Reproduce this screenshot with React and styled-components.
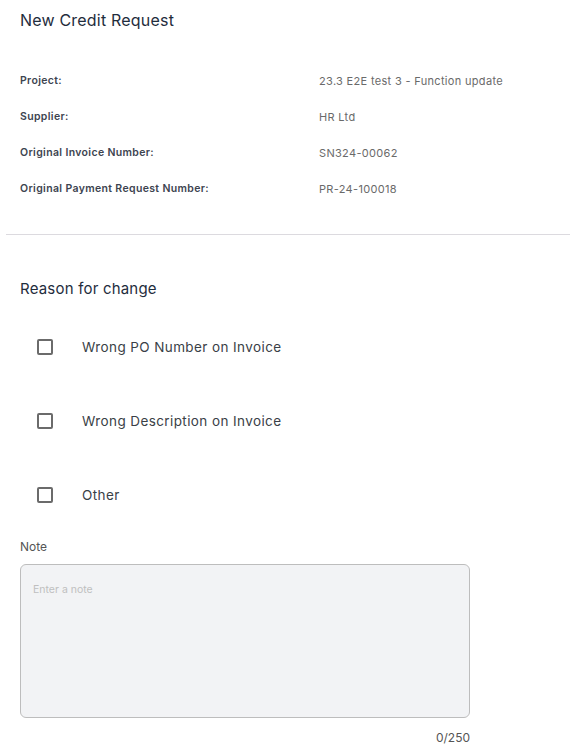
import styled, { createGlobalStyle } from "styled-components";

const GlobalStyle = createGlobalStyle`
  body {
    margin: 0;
    background: #fff;
    font-family: "Inter", "Liberation Sans", sans-serif;
  }
`;

const Page = styled.div`
  width: 571px;
`;

const Header = styled.div`
  padding: 10px 20px 0 20px;
`;

const Title = styled.h1`
  margin: 0;
  font-size: 16px;
  font-weight: 400;
  color: #1f2d3d;
  line-height: 20px;
  letter-spacing: 0.2px;
`;

const Details = styled.div`
  display: grid;
  grid-template-columns: 299px 1fr;
  row-gap: 20px;
  padding-top: 43px;
  padding-bottom: 37px;
`;

const Label = styled.div`
  font-size: 10.5px;
  font-weight: 600;
  color: #3d4450;
  line-height: 16px;
  letter-spacing: 0.35px;
`;

const Value = styled.div`
  font-size: 11px;
  color: #6a6a6a;
  line-height: 16px;
  letter-spacing: 0.32px;
`;

const Divider = styled.hr`
  margin: 0 1px 0 6px;
  border: none;
  border-top: 1px solid #dcdadf;
`;

const Section = styled.div`
  padding: 44px 20px 0 20px;
`;

const SectionTitle = styled.h2`
  margin: 0;
  font-size: 15px;
  font-weight: 400;
  color: #1f2d3d;
  line-height: 20px;
  letter-spacing: 0.2px;
`;

const Options = styled.div`
  display: flex;
  flex-direction: column;
  gap: 54px;
  padding: 38px 0 0 17px;
`;

const Option = styled.label`
  display: flex;
  align-items: center;
  gap: 29px;
  height: 20px;
  font-size: 13.5px;
  color: #3a3f47;
  letter-spacing: 0.4px;
  cursor: pointer;
`;

const Box = styled.span`
  width: 12px;
  height: 12px;
  border: 2px solid #6b6b6b;
  border-radius: 2px;
  flex-shrink: 0;
`;

const NoteLabel = styled.div`
  margin-top: 34px;
  font-size: 12px;
  color: #555;
  line-height: 16px;
`;

const TextArea = styled.textarea`
  display: block;
  box-sizing: border-box;
  width: 450px;
  height: 154px;
  margin-top: 9px;
  padding: 18px 12px;
  background: #f2f3f5;
  border: 1px solid #bdbdbd;
  border-radius: 6px;
  resize: none;
  font-family: inherit;
  font-size: 10.5px;
  color: #333;
  outline: none;

  &::placeholder {
    color: #bfbfbf;
  }
`;

const Counter = styled.div`
  width: 450px;
  text-align: right;
  margin-top: 12px;
  font-size: 12px;
  color: #555;
`;

const rows = [
  ["Project:", "23.3 E2E test 3 - Function update"],
  ["Supplier:", "HR Ltd"],
  ["Original Invoice Number:", "SN324-00062"],
  ["Original Payment Request Number:", "PR-24-100018"],
];

const reasons = [
  "Wrong PO Number on Invoice",
  "Wrong Description on Invoice",
  "Other",
];

const App = () => {
  return (
    <Page>
      <GlobalStyle />
      <Header>
        <Title>New Credit Request</Title>
        <Details>
          {rows.flatMap(([label, value]) => [
            <Label key={label}>{label}</Label>,
            <Value key={label + "-value"}>{value}</Value>,
          ])}
        </Details>
      </Header>
      <Divider />
      <Section>
        <SectionTitle>Reason for change</SectionTitle>
        <Options>
          {reasons.map((r) => (
            <Option key={r}>
              <Box />
              {r}
            </Option>
          ))}
        </Options>
        <NoteLabel>Note</NoteLabel>
        <TextArea placeholder="Enter a note" />
        <Counter>0/250</Counter>
      </Section>
    </Page>
  );
};

export default App;
